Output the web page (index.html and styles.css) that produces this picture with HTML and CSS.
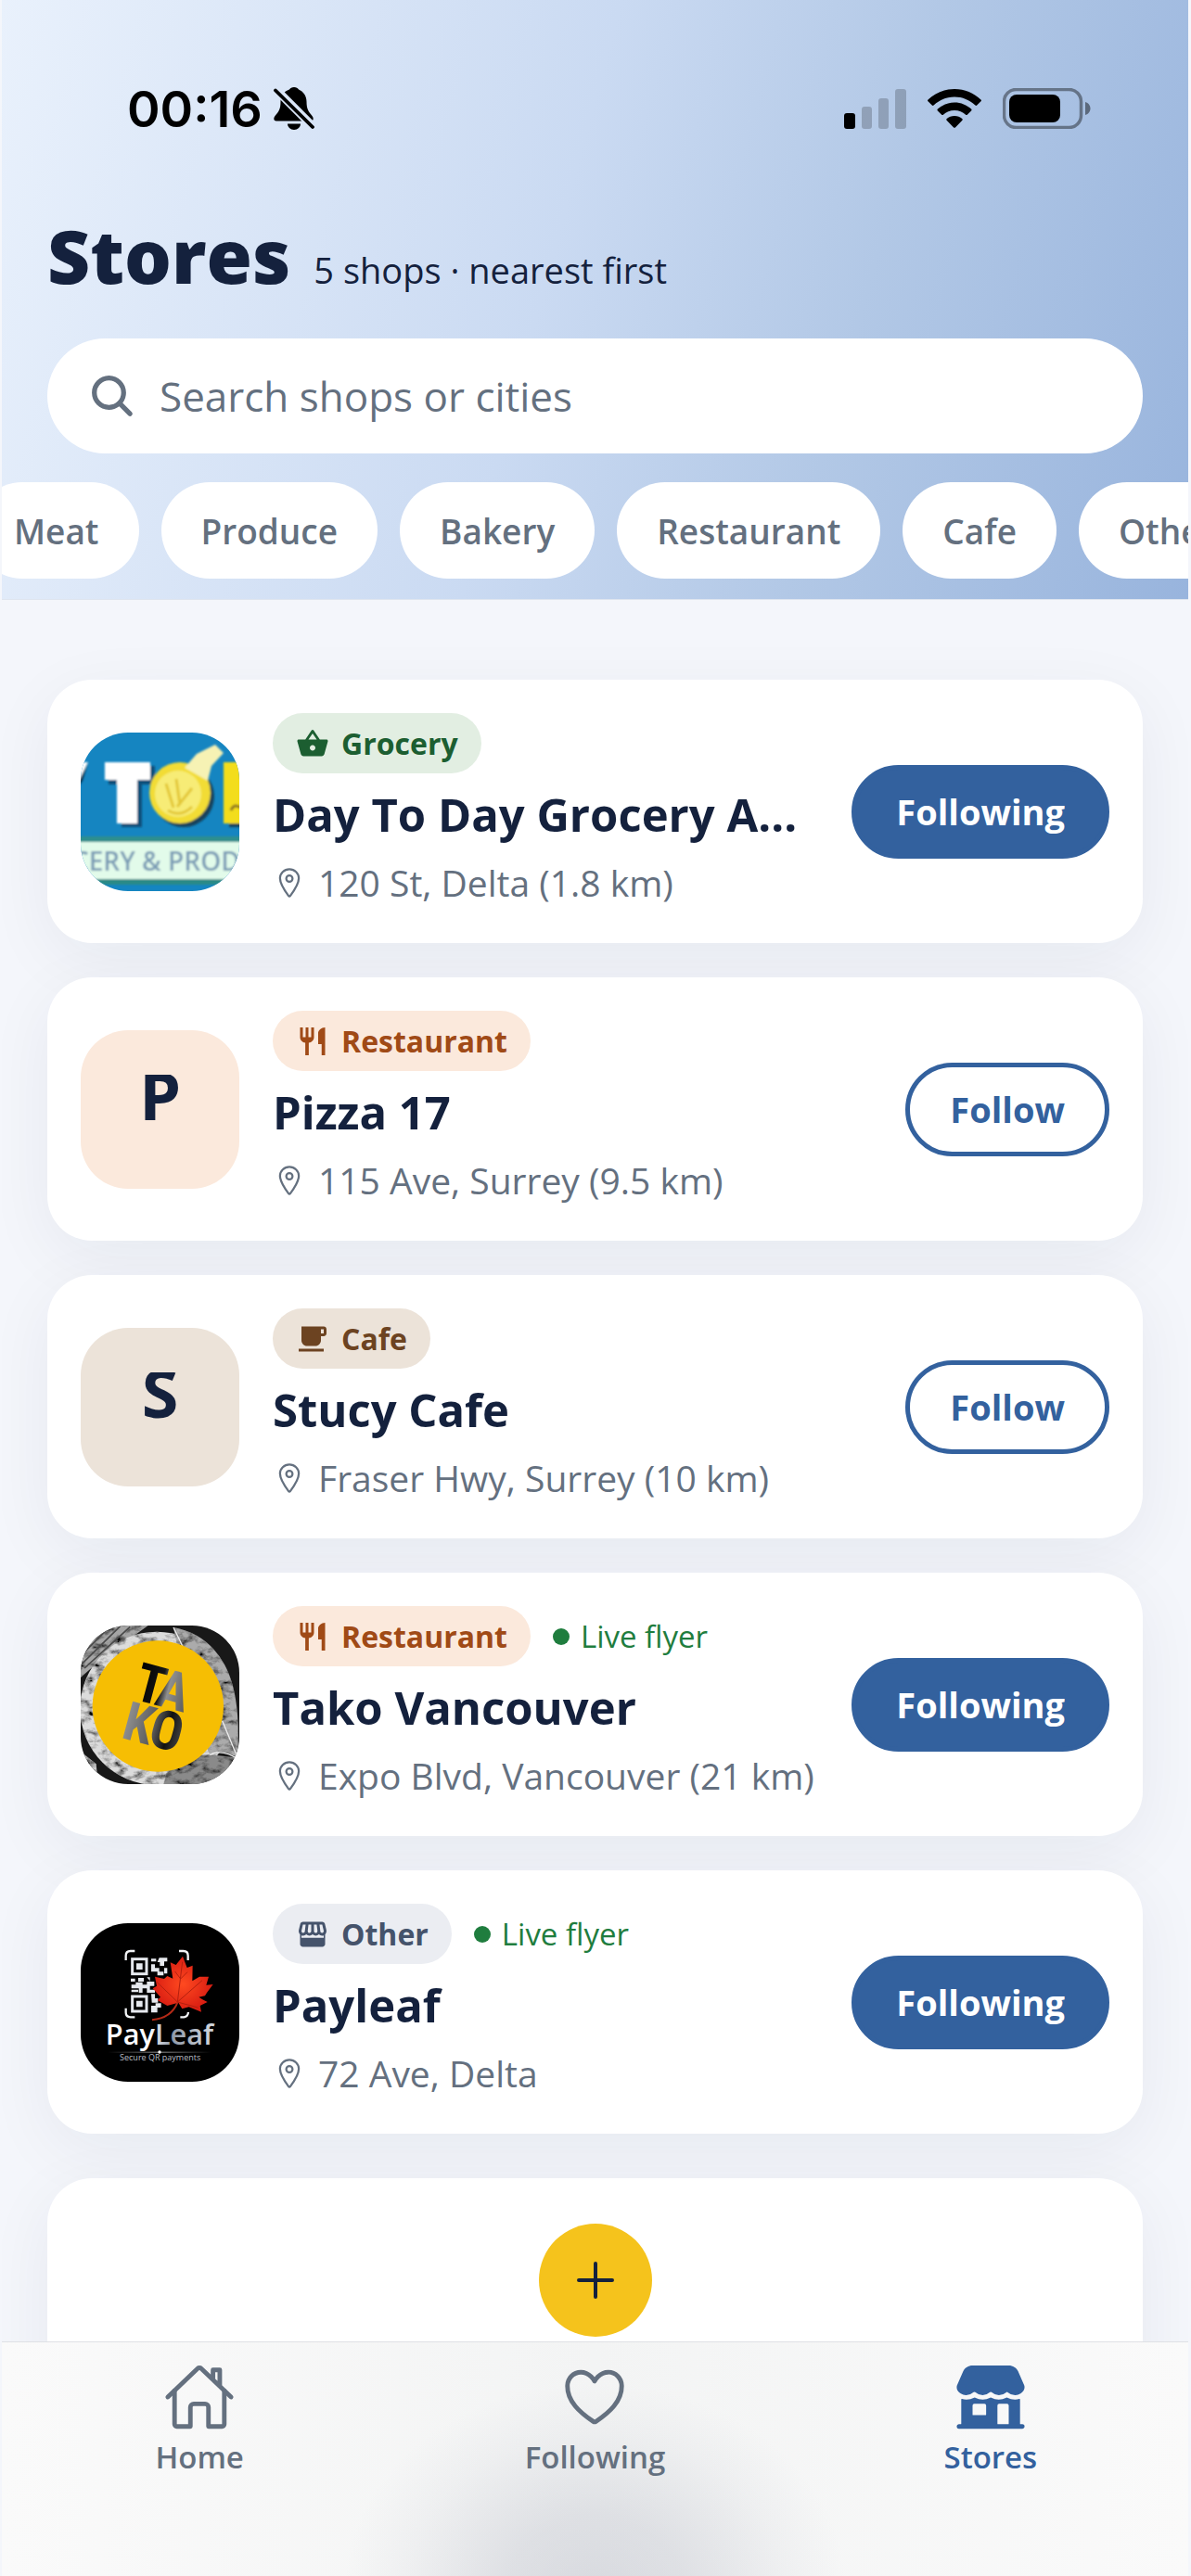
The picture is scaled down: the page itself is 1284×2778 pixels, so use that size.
FILE: index.html
```html
<!DOCTYPE html>
<html lang="en">
<head>
  <meta charset="UTF-8" />
  <meta name="viewport" content="width=device-width, initial-scale=1.0" />
  <title>Stores</title>
  <link rel="stylesheet" href="styles.css">
</head>
<body>
  <!-- shared icons -->
  <svg class="sprite" aria-hidden="true">
    <symbol id="i-pin" viewBox="0 0 512 512">
      <g fill="none" stroke="currentColor" stroke-width="32" stroke-linecap="round" stroke-linejoin="round">
        <path d="M256 48c-79.5 0-144 61.39-144 137 0 87 96 224.87 131.25 272.49a15.77 15.77 0 0025.5 0C304 409.89 400 272.07 400 185c0-75.61-64.5-137-144-137z" />
        <circle cx="256" cy="192" r="48" />
      </g>
    </symbol>
    <symbol id="i-restaurant" viewBox="0 0 24 24">
      <path fill="currentColor" d="M11 9H9V2H7v7H5V2H3v7c0 2.12 1.66 3.84 3.75 3.97V22h2.5v-9.03C11.34 12.84 13 11.12 13 9V2h-2v7zm5-3v8h2.5v8H21V2c-2.76 0-5 2.24-5 4z" />
    </symbol>
  </svg>

  <div class="app">
    <header class="header">
      <div class="status">
        <div class="status-left">
          <span class="time">00:16</span>
          <svg class="bell" viewBox="0 0 44 46">
            <mask id="slash">
              <rect width="44" height="46" fill="#fff" />
              <path d="M-2 -2L46 46" stroke="#000" stroke-width="9" />
            </mask>
            <g mask="url(#slash)">
              <path d="M22 0c-2.5 0-4 1-5 2.500C11 4.500 7.500 9.500 7.500 15.500c0 8-2 11-6 15.500-2 2.500-1.500 5.500 1.500 5.500h37c3 0 3.500-3 1.500-5.500-4-4.500-6-7.500-6-15.500 0-6-3.500-11-8.500-13C26 1 24.500 0 22 0z" />
              <path d="M15 39.500h14c0 3.500-3 6.500-7 6.500s-7-3-7-6.500z" />
            </g>
            <path d="M2 3.500L42 43" stroke="#000" stroke-width="3.800" stroke-linecap="round" />
          </svg>
        </div>
        <div class="status-right">
          <svg class="signal" viewBox="0 0 67 43">
            <rect x="0" y="26" width="12" height="17" rx="3" />
            <g opacity=".2">
              <rect x="19" y="19" width="11" height="24" rx="3" />
              <rect x="37" y="10" width="11" height="33" rx="3" />
              <rect x="55" y="0" width="12" height="43" rx="3" />
            </g>
          </svg>
          <svg class="wifi" viewBox="0 0 58 43">
            <path d="M29 0C18 0 8 4.300 .5 11.500c-.6.600-.6 1.200 0 1.800l4.300 4.300c.5.500 1.200.500 1.800 0C12.600 12 20.400 8.600 29 8.600s16.400 3.400 22.400 9c.6.500 1.300.500 1.800 0l4.300-4.300c.6-.6.600-1.200 0-1.800C50 4.300 40 0 29 0z" />
            <path d="M29 14.500c-7 0-13.300 2.700-18.100 7.100-.6.600-.6 1.200 0 1.800l4.300 4.300c.5.500 1.200.500 1.700 0 3.200-2.900 7.400-4.600 12.100-4.600s8.900 1.700 12.100 4.600c.5.500 1.200.500 1.700 0l4.300-4.300c.6-.6.600-1.200 0-1.800-4.800-4.400-11.100-7.100-18.100-7.100z" />
            <path d="M29 29c-3.200 0-6.100 1.200-8.300 3.100-.6.500-.6 1.200-.1 1.700l7.500 7.600c.6.600 1.200.600 1.800 0l7.500-7.600c.5-.5.500-1.200-.1-1.700C35.100 30.200 32.200 29 29 29z" />
          </svg>
          <svg class="battery" viewBox="0 0 95 44">
            <rect x="1.500" y="1.500" width="83" height="41" rx="13" fill="none" stroke="#000" stroke-opacity=".4" stroke-width="3.500" />
            <rect x="7" y="7" width="55" height="30" rx="8" />
            <path d="M89 15c3.500 1 5.500 4 5.500 7s-2 6-5.500 7z" opacity=".45" />
          </svg>
        </div>
      </div>

      <div class="heading">
        <h1>Stores</h1>
        <p>5 shops · nearest first</p>
      </div>

      <label class="search">
        <svg viewBox="0 0 512 512"><path fill="currentColor" d="M456.690 421.390L362.600 327.300a173.810 173.810 0 0034.840-104.580C397.440 126.380 319.060 48 222.720 48S48 126.380 48 222.720s78.380 174.720 174.720 174.720A173.810 173.810 0 00327.300 362.600l94.090 94.090a25 25 0 0035.300-35.300zM97.920 222.720a124.800 124.800 0 11124.800 124.800 124.950 124.950 0 01-124.800-124.800z" /></svg>
        <input type="search" placeholder="Search shops or cities" aria-label="Search shops or cities" />
      </label>

      <div class="chips">
        <button>Meat</button>
        <button>Produce</button>
        <button>Bakery</button>
        <button>Restaurant</button>
        <button>Cafe</button>
        <button>Other</button>
      </div>
    </header>

    <main class="list">
      <article class="card">
        <svg class="logo" viewBox="0 0 171 171">
          <filter id="soft"><feGaussianBlur stdDeviation="1" /></filter>
          <rect width="171" height="171" fill="#1585c1" />
          <g filter="url(#soft)">
            <path d="M-4 32L8 32L2 52L-4 60z" fill="#0b3550" />
            <path d="M-6 32H8L-4 56z" fill="#fff" />
            <path d="M30 36h50v20H66v46H44V56H30z" fill="#0d5079" />
            <circle cx="111" cy="69" r="33" fill="#15425c" />
            <path d="M26 32h49v19H61v47H39V51H26z" fill="#fff" />
            <path d="M160 36h16v66h-16z" fill="#15425c" />
            <path d="M154 32h22v66h-22z" fill="#f3dd1c" />
            <circle cx="107" cy="65" r="33" fill="#f2dc35" />
            <circle cx="105" cy="66" r="25" fill="#f7ec76" />
            <path d="M112 38l13-15 20-10 9 9-13 14-4 16z" fill="#f6f2b4" />
            <path d="M92 55l8 26M103 50l4 28M120 60l-16 20M94 84q14 8 26-4" fill="none" stroke="#e3c838" stroke-width="3" />
            <path d="M162 84q3-8 10-3" fill="none" stroke="#8f7720" stroke-width="3" />
            <rect x="-3" y="112" width="177" height="8" fill="#2d8f8e" />
            <rect x="-3" y="118" width="177" height="40" fill="#e2fbea" />
            <rect x="-3" y="158" width="177" height="6" fill="#2c8a86" />
            <text class="sign" x="-9" y="149">CERY &amp; PROD</text>
          </g>
        </svg>
        <div class="info">
          <div class="tags">
            <span class="badge grocery">
              <svg viewBox="0 0 24 24"><path fill="currentColor" d="M22 9h-4.790l-4.380-6.560c-.19-.28-.51-.42-.83-.42s-.64.140-.83.430L6.790 9H2c-.55 0-1 .450-1 1 0 .090.010.180.040.270l2.540 9.270c.23.840 1 1.460 1.920 1.460h13c.92 0 1.690-.62 1.930-1.460l2.540-9.270L23 10c0-.55-.45-1-1-1zM9 9l3-4.400L15 9H9zm3 8c-1.100 0-2-.9-2-2s.9-2 2-2 2 .9 2 2-.9 2-2 2z" /></svg>
              Grocery
            </span>
          </div>
          <h2>Day To Day Grocery A...</h2>
          <p class="place"><svg><use href="#i-pin" /></svg>120 St, Delta (1.8 km)</p>
        </div>
        <button class="btn following">Following</button>
      </article>

      <article class="card">
        <div class="logo avatar peach"><span>P</span></div>
        <div class="info">
          <div class="tags">
            <span class="badge restaurant"><svg><use href="#i-restaurant" /></svg>Restaurant</span>
          </div>
          <h2>Pizza 17</h2>
          <p class="place"><svg><use href="#i-pin" /></svg>115 Ave, Surrey (9.5 km)</p>
        </div>
        <button class="btn">Follow</button>
      </article>

      <article class="card">
        <div class="logo avatar sand"><span>S</span></div>
        <div class="info">
          <div class="tags">
            <span class="badge cafe">
              <svg viewBox="0 0 24 24"><path fill="currentColor" d="M20 3H4v10c0 2.210 1.790 4 4 4h6c2.210 0 4-1.790 4-4v-3h2c1.110 0 2-.9 2-2V5c0-1.110-.89-2-2-2zm0 5h-2V5h2v3zM2 21h18v-2H2v2z" /></svg>
              Cafe
            </span>
          </div>
          <h2>Stucy Cafe</h2>
          <p class="place"><svg><use href="#i-pin" /></svg>Fraser Hwy, Surrey (10 km)</p>
        </div>
        <button class="btn">Follow</button>
      </article>

      <article class="card">
        <svg class="logo" viewBox="22 22 513 513">
          <defs>
            <filter id="grain" x="0" y="0" width="1" height="1">
              <feTurbulence type="fractalNoise" baseFrequency=".03 .05" numOctaves="4" seed="4" />
              <feColorMatrix values="0 0 0 0 0  0 0 0 0 0  0 0 0 0 0  2.400 0 0 0 -1" />
              <feComposite in2="SourceGraphic" operator="in" result="n" />
              <feMerge><feMergeNode in="SourceGraphic" /><feMergeNode in="n" /></feMerge>
            </filter>
            <linearGradient id="ink" x1="0" y1="0" x2="1" y2="0">
              <stop offset="0" stop-color="#000" />
              <stop offset=".45" stop-color="#151515" />
              <stop offset=".6" stop-color="#8f8f8f" />
              <stop offset="1" stop-color="#5a5a5a" />
            </linearGradient>
            <linearGradient id="ink2" x1="0" y1="0" x2="1" y2="0">
              <stop offset="0" stop-color="#929292" />
              <stop offset=".5" stop-color="#5b5b5b" />
              <stop offset=".75" stop-color="#111" />
              <stop offset="1" stop-color="#444" />
            </linearGradient>
          </defs>
          <rect x="22" y="22" width="513" height="513" fill="#181818" />
          <g filter="url(#grain)">
            <path d="M22 22H240L90 130 22 190z" fill="#a5a5a5" />
            <circle cx="268" cy="290" r="248" fill="#dcdcdc" />
            <path d="M322 28q110 20 165 120t42 300q-60-30-90-10-60-120-117-410z" fill="#ababab" />
            <path d="M300 500q60-60 140-60l95 10v85H290z" fill="#8a8a8a" />
            <path d="M22 430l50 40 6 65H22z" fill="#cfcfcf" />
          </g>
          <path d="M22 150L150 24M22 120L118 24M22 90L88 24M34 160L182 26" stroke="#4a4a4a" stroke-width="5" />
          <path d="M322 28l32 66M480 330l48 116M440 440q40-20 90 14" stroke="#eee" stroke-width="4" fill="none" />
          <circle cx="272" cy="283" r="212" fill="#f6be03" />
          <g class="tako" transform="rotate(15 270 280)">
            <text x="186 256" y="281" fill="url(#ink)">TA</text>
            <text x="180 268" y="412" fill="url(#ink2)">KO</text>
          </g>
        </svg>
        <div class="info">
          <div class="tags">
            <span class="badge restaurant"><svg><use href="#i-restaurant" /></svg>Restaurant</span>
            <span class="live">Live flyer</span>
          </div>
          <h2>Tako Vancouver</h2>
          <p class="place"><svg><use href="#i-pin" /></svg>Expo Blvd, Vancouver (21 km)</p>
        </div>
        <button class="btn following">Following</button>
      </article>

      <article class="card">
        <svg class="logo" viewBox="22 985 513 513">
          <defs>
            <linearGradient id="steel" x1="0" y1="0" x2="1" y2="0">
              <stop offset=".4" stop-color="#fff" />
              <stop offset=".6" stop-color="#8f99a8" />
              <stop offset="1" stop-color="#d5dae0" />
            </linearGradient>
            <linearGradient id="flare" x1="0" y1="0" x2="1" y2="0">
              <stop offset="0" stop-color="#fff" stop-opacity="0" />
              <stop offset=".5" stop-color="#fff" stop-opacity=".6" />
              <stop offset="1" stop-color="#fff" stop-opacity="0" />
            </linearGradient>
            <radialGradient id="leaf">
              <stop offset="0" stop-color="#ff4a20" />
              <stop offset="1" stop-color="#d91d12" />
            </radialGradient>
          </defs>
          <rect x="22" y="985" width="513" height="513" fill="#000" />
          <path d="M168 1105v-15q0-15 15-15h14M340 1075h14q15 0 15 15v15M168 1260v14q0 15 15 15h14M344 1289h12q13-2 14-16" fill="none" stroke="#f1f3f5" stroke-width="7" />
          <g fill="none" stroke="#e6e9ee" stroke-width="9">
            <rect x="189" y="1101" width="46" height="48" />
            <rect x="189" y="1222" width="46" height="48" />
          </g>
          <path fill="#e6e9ee" d="M202 1115h20v20h-20zM202 1236h20v20h-20zM250 1100h16v9h-16zM276 1097h26v12h-10v14h-14v-12h-8zM250 1118h12v12h14v12h14v12h-20v-12h-20zM292 1130h10v18h-10zM184 1164h14v10h-14zM208 1162h18v12h-18zM236 1160h10v14h14v14h-14v12h16v10h-26v-14h-14v14h-12v-14h-24v-12h14v-8h22v8h14v-10h12zM186 1200h22v8h-22zM250 1214h12v14h10v14h-20zM250 1252h14v-8h18v14h-12v16h-20z" />
          <path fill="url(#leaf)" d="M352 1092l14 37 18-7-1 50 23-14 30 0-8 27 22-2-20 27 -6 10 -20 4 12 8 16 8-24 12 4 20-40-16-22 6-12-20-36 10-32-18 10-10-25-28 13-8-6-30 30 7 10-9 18 8-8-52 18 8z" />
          <path d="M335 1242q-20 50-82 56" fill="none" stroke="#b32a17" stroke-width="6" />
          <path d="M335 1240l16-130M335 1240l80-70M335 1240l-68-66M335 1240l66 18M345 1165l22-22M345 1165l-18-24" fill="none" stroke="#b3200f" stroke-width="3" />
          <text class="pay" x="277" y="1379" fill="url(#steel)">PayLeaf</text>
          <rect x="110" y="1401" width="334" height="3" fill="url(#flare)" />
          <circle cx="277" cy="1402" r="5" fill="#fff" />
          <text class="tagline" x="279" y="1430">Secure QR payments</text>
        </svg>
        <div class="info">
          <div class="tags">
            <span class="badge other">
              <svg viewBox="0 0 24 24"><path fill="currentColor" d="M21.900 8.890l-1.050-4.370c-.22-.9-1-1.520-1.910-1.520H5.050c-.9 0-1.690.630-1.900 1.520L2.100 8.890c-.24 1.020-.02 2.060.620 2.880.080.110.190.190.280.290V19c0 1.100.9 2 2 2h14c1.100 0 2-.9 2-2v-6.940c.09-.09.2-.18.280-.28.640-.82.870-1.870.620-2.890zm-2.990-3.900l1.050 4.370c.1.420.010.840-.25 1.170-.14.180-.44.470-.94.470-.61 0-1.140-.49-1.210-1.140L16.980 5l1.930-.01zM13 5h1.960l.54 4.520c.05.390-.07.780-.33 1.070-.22.260-.54.410-.95.410-.67 0-1.220-.59-1.220-1.310V5zM8.490 9.520L9.040 5H11v4.690c0 .720-.55 1.310-1.290 1.310-.34 0-.65-.15-.89-.41-.25-.29-.37-.68-.33-1.070zm-4.450-.16L5.050 5h1.970l-.58 4.860c-.08.650-.6 1.140-1.210 1.140-.49 0-.8-.29-.93-.47-.27-.32-.36-.75-.26-1.170zM4 14.500V12.800c.4.100.800.200 1.230.2.870 0 1.660-.36 2.240-.95.600.600 1.400.950 2.310.950.870 0 1.650-.36 2.230-.93.590.570 1.390.930 2.290.930.840 0 1.640-.35 2.240-.95.580.590 1.370.950 2.240.950.400 0 .800-.1 1.220-.2v1.700z" /></svg>
              Other
            </span>
            <span class="live">Live flyer</span>
          </div>
          <h2>Payleaf</h2>
          <p class="place"><svg><use href="#i-pin" /></svg>72 Ave, Delta</p>
        </div>
        <button class="btn following">Following</button>
      </article>

      <section class="card add-card">
        <button class="add" aria-label="Add a store">
          <svg viewBox="0 0 42 42"><path d="M21 3v36M3 21h36" stroke="currentColor" stroke-width="4" stroke-linecap="round" /></svg>
        </button>
      </section>
    </main>

    <nav class="tabs">
      <a href="#">
        <svg viewBox="0 0 512 512">
          <g fill="none" stroke="currentColor" stroke-width="32" stroke-linecap="round" stroke-linejoin="round">
            <path d="M80 212v236a16 16 0 0016 16h96V328a24 24 0 0124-24h80a24 24 0 0124 24v136h96a16 16 0 0016-16V212" />
            <path d="M480 256L266.890 52c-5-5.280-16.690-5.340-21.780 0L32 256M400 179V64h-48v69" />
          </g>
        </svg>
        Home
      </a>
      <a href="#">
        <svg viewBox="0 0 512 512">
          <path fill="none" stroke="currentColor" stroke-width="32" stroke-linejoin="round" d="M352.920 80C288 80 256 144 256 144s-32-64-96.920-64c-52.760 0-94.540 44.140-95.080 96.810-1.100 109.330 86.730 187.080 183 252.420a16 16 0 0018 0c96.260-65.340 184.090-143.090 183-252.420-.54-52.670-42.320-96.810-95.080-96.810z" />
        </svg>
        Following
      </a>
      <a href="#" class="active">
        <svg viewBox="0 0 512 512">
          <path fill="currentColor" d="M480 448h-12a4 4 0 01-4-4V273.510a4 4 0 00-5.240-3.860 104.920 104.920 0 01-28.320 4.780c-1.180 0-2.300.050-3.400.050a108.220 108.220 0 01-52.850-13.640 8.230 8.230 0 00-8 0 108.180 108.180 0 01-52.840 13.640 106.110 106.110 0 01-52.460-13.790 8.210 8.210 0 00-8.090 0 108.140 108.140 0 01-53.160 13.800 106.190 106.190 0 01-52.770-14 8.250 8.250 0 00-8.160 0 106.190 106.190 0 01-52.770 14c-1.090 0-2.190 0-3.370-.05h-.06a104.910 104.910 0 01-29.280-5.090 4 4 0 00-5.230 3.800V444a4 4 0 01-4 4H32.500c-8.640 0-16.100 6.640-16.480 15.280A16 16 0 0032 480h447.500c8.640 0 16.100-6.640 16.480-15.280A16 16 0 00480 448zm-256-68a4 4 0 01-4 4h-88a4 4 0 01-4-4v-64a12 12 0 0112-12h72a12 12 0 0112 12zm156 68h-72a4 4 0 01-4-4V316a12 12 0 0112-12h56a12 12 0 0112 12v128a4 4 0 01-4 4zM492.570 170.280l-42.920-98.490C438.410 47.620 412.740 32 384.250 32H127.700c-28.490 0-54.160 15.620-65.400 39.790l-42.920 98.490c-9 19.410 2.890 39.340 2.900 39.350l.28.450c.49.780 1.360 2 1.890 2.780.050.060.090.130.140.200l5 6.050a7.450 7.450 0 00.6.650l5 4.830.42.360a69.650 69.650 0 009.390 6.780v.05a74 74 0 0036 10.670h2.470a76.080 76.080 0 0051.890-20.310l.33-.31a7.940 7.940 0 0110.890 0l.33.310a77.300 77.300 0 00104.460 0 8 8 0 0110.870 0 77.310 77.310 0 00104.210.230 7.880 7.880 0 0110.710 0 76.810 76.810 0 0052.310 20.080h2.490a71.350 71.350 0 0035-10.700c.95-.57 1.860-1.170 2.780-1.770A71.330 71.330 0 00488 212.170l1.740-2.630q.26-.4.480-.84c1.660-3.380 10.560-20.760 2.350-38.420z" />
        </svg>
        Stores
      </a>
    </nav>
  </div>
</body>
</html>
```
FILE: styles.css
```css
* {
  margin: 0;
  padding: 0;
  box-sizing: border-box;
}

body {
  font-family: 'Open Sans', sans-serif;
  background: #f4f6fb;
  color: #14213d;
}

button,
input {
  font-family: inherit;
  border: none;
}

svg {
  display: block;
  flex-shrink: 0;
}

.sprite {
  position: absolute;
  width: 0;
  height: 0;
}

.app {
  height: 100vh;
  display: flex;
  flex-direction: column;
  border: solid #f4f6fb;
  border-width: 0 3px 0 2px;
}

/* header */

.header {
  display: flex;
  flex-direction: column;
  padding: 83px 49px 22px;
  background: linear-gradient(105deg, #e9f1fc 0%, #cadaf2 46%, #b2c8e6 70%, #98b4dd 100%);
  border-bottom: 1px solid #dfe5ef;
  overflow: hidden;
}

.status {
  display: flex;
  justify-content: space-between;
  align-items: center;
  height: 68px;
  margin-bottom: 76px;
  padding: 0 56px 0 86px;
  color: #000;
}

.status-left {
  display: flex;
  align-items: center;
  gap: 12px;
}

.time {
  font-family: Inter, sans-serif;
  font-size: 54px;
  font-weight: 600;
}

.bell {
  width: 44px;
  height: 46px;
}

.status-right {
  display: flex;
  align-items: center;
  gap: 23px;
}

.signal {
  width: 67px;
  height: 43px;
}

.wifi {
  width: 58px;
  height: 43px;
}

.battery {
  width: 95px;
  height: 44px;
}

.heading {
  display: flex;
  align-items: baseline;
  gap: 25px;
  margin-bottom: 42px;
}

.heading h1 {
  font-size: 80px;
  line-height: 96px;
  font-weight: 800;
}

.heading p {
  font-size: 38px;
}

.search {
  display: flex;
  align-items: center;
  gap: 24px;
  height: 124px;
  padding: 0 43px;
  margin-bottom: 31px;
  background: #fff;
  border-radius: 62px;
  color: #64707f;
}

.search svg {
  width: 54px;
  height: 54px;
}

.search input {
  flex: 1;
  min-width: 0;
  font-size: 44px;
  background: none;
  color: #14213d;
  outline: none;
}

.search input::placeholder {
  color: #64707f;
}

.chips {
  display: flex;
  gap: 24px;
  margin: 0 -49px 0 -79px;
}

.chips button {
  flex-shrink: 0;
  height: 104px;
  padding: 0 43px;
  border-radius: 52px;
  background: #fff;
  color: #64707f;
  font-size: 37px;
  font-weight: 600;
}

/* store list */

.list {
  flex: 1;
  min-height: 0;
  overflow: hidden;
  display: flex;
  flex-direction: column;
  gap: 37px;
  padding: 86px 49px 0;
}

.card {
  flex-shrink: 0;
  display: flex;
  align-items: center;
  gap: 36px;
  padding: 36px;
  background: #fff;
  border-radius: 48px;
  box-shadow: 0 18px 72px rgba(20, 33, 61, 0.06);
}

.logo {
  width: 171px;
  height: 171px;
  flex-shrink: 0;
  border-radius: 51px;
  overflow: hidden;
}

.avatar {
  display: flex;
  align-items: center;
  justify-content: center;
}

.avatar span {
  height: 74px;
  overflow: hidden;
  font-size: 72px;
  line-height: 42px;
  font-weight: 700;
}

.peach {
  background: #fbe9dc;
}

.sand {
  background: #ece3d9;
}

.sign {
  font-size: 28px;
  font-weight: 600;
  fill: #7b9db5;
}

.tako {
  font-family: 'Roboto Condensed', Roboto, sans-serif;
  font-size: 174px;
  font-weight: 700;
}

.pay {
  font-size: 92px;
  font-weight: 600;
  text-anchor: middle;
}

.tagline {
  font-size: 27px;
  fill: #b9bec6;
  text-anchor: middle;
}

.info {
  flex: 1;
  min-width: 0;
  display: flex;
  flex-direction: column;
  gap: 12px;
}

.tags {
  display: flex;
  align-items: center;
  gap: 24px;
}

.badge {
  display: flex;
  align-items: center;
  gap: 13px;
  height: 65px;
  padding: 0 25px;
  border-radius: 33px;
  font-size: 32px;
  font-weight: 700;
}

.badge svg {
  width: 36px;
  height: 36px;
}

.grocery {
  background: #e2eee2;
  color: #1c5e31;
}

.restaurant {
  background: #fbe9dc;
  color: #a04a16;
}

.cafe {
  background: #ece3d9;
  color: #6c4321;
}

.other {
  background: #ebedf2;
  color: #45536b;
}

.live {
  display: flex;
  align-items: center;
  gap: 12px;
  font-size: 33px;
  font-weight: 500;
  line-height: 44px;
  color: #1f7d3e;
}

.live::before {
  content: '';
  width: 18px;
  height: 18px;
  border-radius: 50%;
  background: #1f7d3e;
}

.info h2 {
  font-size: 49px;
  line-height: 65px;
  font-weight: 700;
  white-space: nowrap;
  overflow: hidden;
  text-overflow: ellipsis;
}

.place {
  display: flex;
  align-items: center;
  gap: 13px;
  font-size: 39px;
  line-height: 58px;
  white-space: nowrap;
  color: #64707f;
}

.place svg {
  width: 36px;
  height: 36px;
}

.btn {
  flex-shrink: 0;
  height: 101px;
  padding: 0 43px;
  border: 5px solid #33619e;
  border-radius: 51px;
  background: #fff;
  color: #33619e;
  font-size: 38px;
  font-weight: 700;
}

.following {
  background: #33619e;
  color: #fff;
}

.add-card {
  justify-content: center;
  margin-top: 11px;
  padding: 49px 36px 120px;
}

.add {
  display: flex;
  align-items: center;
  justify-content: center;
  width: 122px;
  height: 122px;
  border-radius: 50%;
  background: #f5c31c;
  color: #14213d;
}

.add svg {
  width: 42px;
  height: 42px;
}

/* bottom tabs */

.tabs {
  display: grid;
  grid-template-columns: repeat(3, 1fr);
  height: 253px;
  padding-top: 20px;
  border-top: 1px solid #dfe1e5;
  background:
    radial-gradient(ellipse 270px 220px at 50% 105%, rgba(190, 193, 203, 0.5), rgba(190, 193, 203, 0.4) 35%, rgba(190, 193, 203, 0.12) 75%, rgba(190, 193, 203, 0)),
    linear-gradient(90deg, #fafafa, #f3f4f4 50%, #fafafa);
}

.tabs a {
  display: flex;
  flex-direction: column;
  align-items: center;
  gap: 4px;
  font-size: 33px;
  line-height: 44px;
  font-weight: 600;
  text-decoration: none;
  color: #64707f;
}

.tabs svg {
  width: 78px;
  height: 78px;
}

.tabs .active {
  color: #33619e;
}
```
